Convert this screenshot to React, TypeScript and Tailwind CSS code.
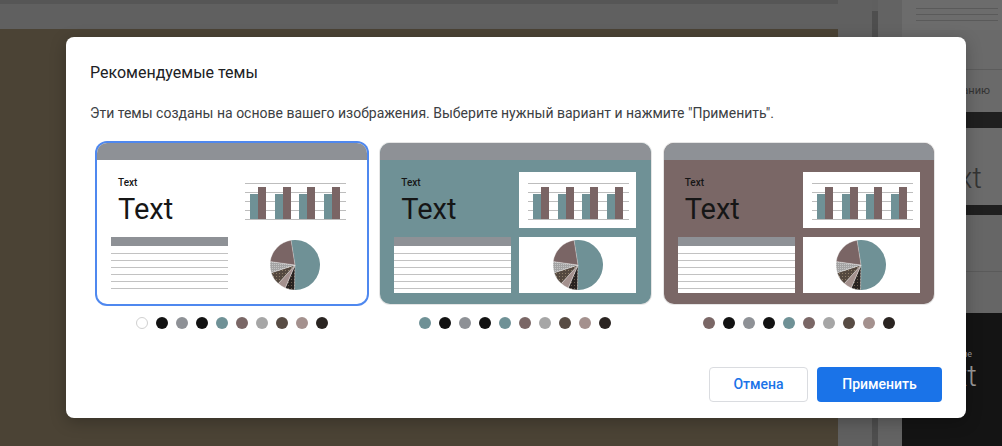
import React from "react";

const TEAL = "#6f9196";
const MAUVE = "#7a6766";

function polar(r: number, deg: number): [number, number] {
  const a = ((deg - 90) * Math.PI) / 180;
  return [25 + r * Math.cos(a), 25 + r * Math.sin(a)];
}
function slice(a0: number, a1: number) {
  const [x0, y0] = polar(25, a0);
  const [x1, y1] = polar(25, a1);
  const large = a1 - a0 > 180 ? 1 : 0;
  return `M25 25 L${x0.toFixed(2)} ${y0.toFixed(2)} A25 25 0 ${large} 1 ${x1.toFixed(2)} ${y1.toFixed(2)} Z`;
}

function Pie({ id }: { id: string }) {
  return (
    <svg width="50" height="50" viewBox="0 0 50 50">
      <defs>
        <pattern id={`g${id}`} width="2" height="2" patternUnits="userSpaceOnUse">
          <rect width="2" height="2" fill="#a3a3a3" />
          <rect width="1" height="1" fill="#c4c4c4" />
        </pattern>
        <pattern id={`b${id}`} width="3" height="3" patternUnits="userSpaceOnUse">
          <rect width="3" height="3" fill="#54483f" />
          <rect width="1" height="1" fill="#8d7d68" />
        </pattern>
        <pattern id={`d${id}`} width="3" height="3" patternUnits="userSpaceOnUse">
          <rect width="3" height="3" fill="#282220" />
          <rect width="1" height="1" fill="#6b5d4e" />
        </pattern>
      </defs>
      <path d={slice(-9, 181)} fill={TEAL} />
      <path d={slice(181, 203)} fill={`url(#d${id})`} stroke="#ffffff" strokeWidth="0.3" />
      <path d={slice(203, 222)} fill="#a4918e" stroke="#ffffff" strokeWidth="0.3" />
      <path d={slice(222, 252)} fill={`url(#b${id})`} stroke="#ffffff" strokeWidth="0.3" />
      <path d={slice(252, 278)} fill={`url(#g${id})`} stroke="#ffffff" strokeWidth="0.3" />
      <path d={slice(278, 351)} fill="#7a6565" stroke="#ffffff" strokeWidth="0.3" />
    </svg>
  );
}

function Chart() {
  const xs = [14, 39, 63, 88];
  return (
    <svg width="117" height="56" viewBox="0 0 117 56">
      {[11, 20, 29, 38, 47].map((y) => (
        <line key={y} x1="9" x2="110" y1={y + 0.5} y2={y + 0.5} stroke="#bdbdbd" strokeWidth="1" />
      ))}
      {xs.map((x) => (
        <g key={x}>
          <rect x={x} y={22} width={8} height={25} fill="#6f9196" />
          <rect x={x + 8} y={15} width={8} height={32} fill="#7a6565" />
        </g>
      ))}
    </svg>
  );
}

function Table() {
  return (
    <div className="w-[117px] h-[56px] bg-white flex flex-col">
      <div className="h-[9px] bg-[#8e9196]" />
      <div className="flex flex-col pt-[7px] gap-[6px]">
        {[0, 1, 2, 3, 4, 5].map((i) => (
          <div key={i} className="h-px bg-[#c2c2c2]" />
        ))}
      </div>
    </div>
  );
}

function Thumb({ bg, selected, id }: { bg: string; selected?: boolean; id: string }) {
  return (
    <div
      className={
        selected
          ? "h-[161px] rounded-[10px] overflow-hidden flex flex-col ring-2 ring-[#4f88ef] bg-white"
          : "h-[161px] rounded-[10px] overflow-hidden flex flex-col shadow-[0_0_0_1px_rgba(0,0,0,0.1)]"
      }
      style={{ background: bg }}
    >
      <div className="h-[17px] bg-[#8e9196] shrink-0" />
      <div className="pt-[12px] pl-[14px] grid grid-cols-[117px_117px] grid-rows-[56px_56px] gap-x-[8px] gap-y-[9px]">
        <div className="pt-[5px] pl-[7px] text-[#161616]">
          <div className="text-[10px] leading-[12px] font-medium">Text</div>
          <div className="mt-[6px] text-[29px] leading-[29px] font-normal">Text</div>
        </div>
        <div className="bg-white">
          <Chart />
        </div>
        <Table />
        <div className="bg-white flex items-center justify-center">
          <Pie id={id} />
        </div>
      </div>
    </div>
  );
}

function Dots({ first }: { first: "white" | "teal" | "mauve" }) {
  const firstCls =
    first === "white"
      ? "bg-white border border-[#d0d0d0]"
      : first === "teal"
      ? "bg-[#6f9196]"
      : "bg-[#7a6766]";
  const rest = [
    "bg-[#121212]",
    "bg-[#8e9196]",
    "bg-[#121212]",
    "bg-[#6f9196]",
    "bg-[#7a6766]",
    "bg-[#a6a6a6]",
    "bg-[#584c44]",
    "bg-[#a4918e]",
    "bg-[#2a2421]",
  ];
  return (
    <div className="mt-[13px] flex justify-center gap-[8px]">
      <div className={"w-[12px] h-[12px] rounded-full " + firstCls} />
      {rest.map((c, i) => (
        <div key={i} className={"w-[12px] h-[12px] rounded-full " + c} />
      ))}
    </div>
  );
}

export default function App() {
  return (
    <div className="relative w-[1002px] h-[446px] overflow-hidden flex bg-[#5f5f5f] font-['Roboto',sans-serif]">
      <div className="w-[838px] flex flex-col">
        <div className="h-[29px] bg-[#606060] border-t-[4px] border-[#565656]" />
        <div className="flex-1 bg-[#4b4335]" />
      </div>
      <div className="flex-1 flex">
        <div className="w-[34px] bg-[#606060]" />
        <div className="w-[6px] bg-[#4e4e4e] mt-[11px]" />
        <div className="w-[24px] bg-[#636363]" />
        <div className="flex-1 flex flex-col">
          <div className="h-[30px] bg-[#6c6c6c] flex flex-col gap-[5px] pt-[8px] pl-[14px] pr-[4px]">
            <div className="h-px bg-[#5a5a5a]" />
            <div className="h-px bg-[#5a5a5a]" />
            <div className="h-px bg-[#5a5a5a]" />
          </div>
          <div className="h-[40px] bg-[#6a6a6a] border-b border-[#5c5c5c]" />
          <div className="h-[42px] bg-[#6a6a6a] flex items-center justify-end pr-[12px] text-[11px] text-[#333333] whitespace-nowrap">
            По умолчанию
          </div>
          <div className="h-[16px] bg-[#1f1f1f]" />
          <div className="h-[77px] bg-[#6b6b6b] flex items-end justify-end pr-[20px] pb-[12px] text-[30px] leading-[30px] font-light text-[#333333] whitespace-nowrap">
            Text
          </div>
          <div className="h-[10px] bg-[#1f1f1f]" />
          <div className="h-[98px] bg-[#666666] flex flex-col">
            <div className="h-[57px] border-b border-[#5a5a5a]" />
          </div>
          <div className="flex-1 bg-[#141414] flex flex-col items-end pt-[36px] text-[#9a9a9a] whitespace-nowrap">
            <div className="text-[9px] leading-[10px] pr-[30px]">Название</div>
            <div className="text-[30px] leading-[30px] font-light pr-[25px] mt-[2px]">Text</div>
          </div>
        </div>
      </div>

      <div className="absolute left-[66px] top-[37px] w-[900px] h-[381px] bg-white rounded-[8px] shadow-[0_4px_16px_rgba(0,0,0,0.25)] px-[24px] pt-[24px] pb-[16px] flex flex-col">
        <div className="text-[16px] leading-[24px] text-[#202124]">Рекомендуемые темы</div>
        <div className="mt-[18px] text-[14px] leading-[20px] text-[#3c4043]">
          Эти темы созданы на основе вашего изображения. Выберите нужный вариант и нажмите "Применить".
        </div>
        <div className="mt-[20px] ml-[7px] mr-[8px] grid grid-cols-3 gap-x-[13px]">
          <div className="flex flex-col">
            <Thumb bg="#ffffff" selected id="a" />
            <Dots first="white" />
          </div>
          <div className="flex flex-col">
            <Thumb bg={TEAL} id="b" />
            <Dots first="teal" />
          </div>
          <div className="flex flex-col">
            <Thumb bg={MAUVE} id="c" />
            <Dots first="mauve" />
          </div>
        </div>
        <div className="mt-auto flex justify-end gap-[9px]">
          <button className="w-[99px] h-[35px] rounded-[4px] border border-[#dadce0] bg-white text-[14px] font-medium text-[#1a73e8]">
            Отмена
          </button>
          <button className="w-[125px] h-[35px] rounded-[4px] bg-[#1a73e8] text-[14px] font-medium text-white">
            Применить
          </button>
        </div>
      </div>
    </div>
  );
}
